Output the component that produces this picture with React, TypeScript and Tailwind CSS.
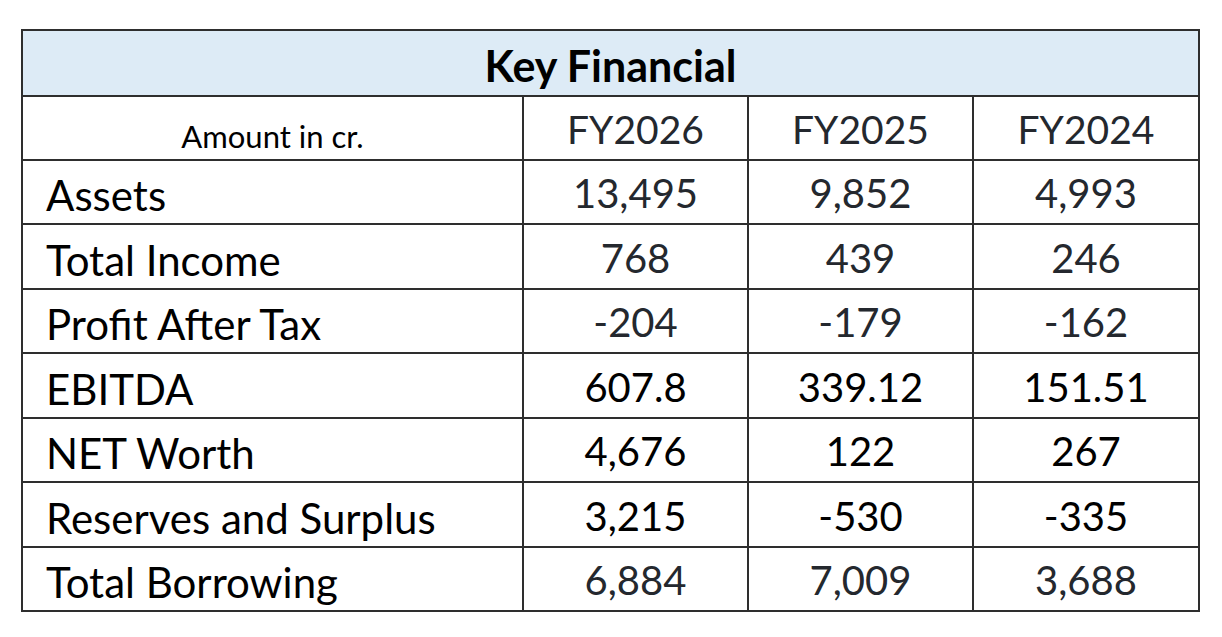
import React from "react";

type Row = { label: string; values: string[]; dark: boolean };

const rows: Row[] = [
  { label: "Assets", values: ["13,495", "9,852", "4,993"], dark: false },
  { label: "Total Income", values: ["768", "439", "246"], dark: false },
  { label: "Profit After Tax", values: ["-204", "-179", "-162"], dark: false },
  { label: "EBITDA", values: ["607.8", "339.12", "151.51"], dark: true },
  { label: "NET Worth", values: ["4,676", "122", "267"], dark: true },
  { label: "Reserves and Surplus", values: ["3,215", "-530", "-335"], dark: true },
  { label: "Total Borrowing", values: ["6,884", "7,009", "3,688"], dark: false },
];

const heights = ["h-[64px]", "h-[65px]", "h-[64px]", "h-[65px]", "h-[64px]", "h-[65px]", "h-[64px]"];

export default function App() {
  return (
    <div className="w-[1222px] h-[637px] bg-white pt-[29px] pl-[21px]" style={{ fontFamily: "Lato, 'Open Sans', sans-serif" }}>
      <div className="w-[1179px] grid grid-cols-[501px_225px_225px_226px] border-t-2 border-l-2 border-[#2e2e2e]">
        <div className="col-span-4 h-[66px] bg-[#ddebf6] border-r-2 border-b-2 border-[#2e2e2e] flex items-end justify-center pb-[8px]">
          <span className="text-[43px] font-bold leading-none text-black">Key Financial</span>
        </div>
        <div className="h-[64px] border-r-2 border-b-2 border-[#2e2e2e] flex items-end justify-center pb-[7px]">
          <span className="text-[31px] leading-none text-black">Amount in cr.</span>
        </div>
        {["FY2026", "FY2025", "FY2024"].map((y) => (
          <div key={y} className="h-[64px] border-r-2 border-b-2 border-[#2e2e2e] flex items-end justify-center pb-[10px]">
            <span className="text-[39px] leading-none text-[#24282e]">{y}</span>
          </div>
        ))}
        {rows.map((r, i) => (
          <React.Fragment key={r.label}>
            <div className={`${heights[i]} border-r-2 border-b-2 border-[#2e2e2e] flex items-end pl-[23px] pb-[7px]`}>
              <span className="text-[42px] leading-none text-black">{r.label}</span>
            </div>
            {r.values.map((v, j) => (
              <div key={j} className={`${heights[i]} border-r-2 border-b-2 border-[#2e2e2e] flex items-end justify-center pb-[10px]`}>
                <span className={`text-[40px] leading-none ${r.dark ? "text-black" : "text-[#24282e]"}`}>{v}</span>
              </div>
            ))}
          </React.Fragment>
        ))}
      </div>
    </div>
  );
}
